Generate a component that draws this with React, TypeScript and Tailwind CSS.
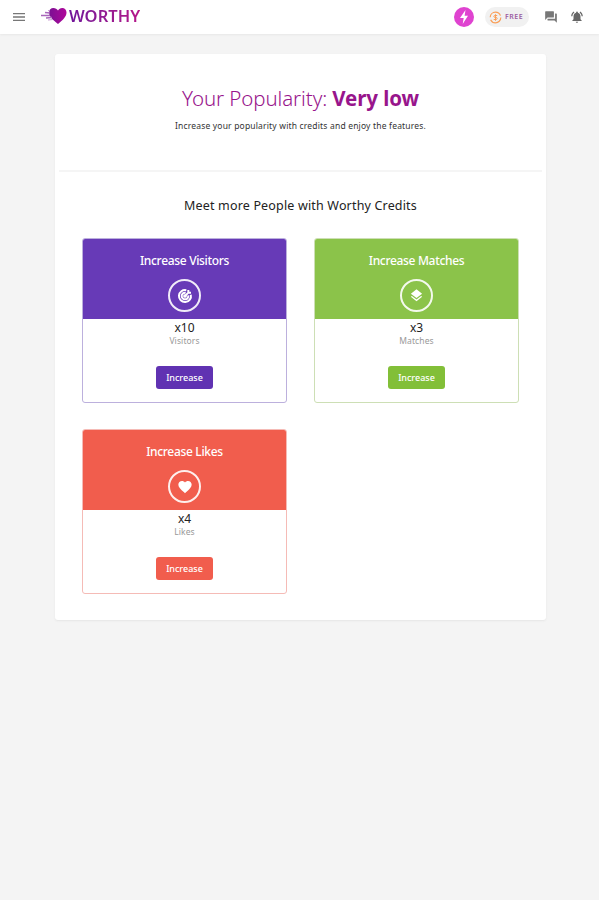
import type { ReactNode } from "react";
import { MdMenu, MdForum, MdNotificationsActive, MdLayers, MdFavorite } from "react-icons/md";

function BullseyeArrow() {
  return (
    <svg viewBox="0 0 24 24" className="size-4" fill="none" stroke="currentColor" strokeWidth="3">
      <path d="M14 3.3A9 9 0 1 0 20.7 10" />
      <path d="M13 7.1A5 5 0 1 0 16.9 11" />
      <path d="M12 12l6.5-6.5M17 3v4h4" />
      <circle cx="12" cy="12" r="1.3" fill="currentColor" />
    </svg>
  );
}

function Logo() {
  return (
    <div className="mb-[3px] ml-[14px] flex h-5 items-center">
      <svg width="26" height="18" viewBox="0 0 26 18">
        <defs>
          <linearGradient id="heart" x1="0" x2="1">
            <stop offset="0" stopColor="#7a1093" />
            <stop offset="1" stopColor="#b0079a" />
          </linearGradient>
        </defs>
        <path d="M17 17C12 13 8 9.5 8 5.5C8 2.7 10 1 12.3 1C14.5 1 16 2 17 3.6C18 2 19.2 1 21.3 1C23.7 1 25.5 2.8 25.5 5.5C25.5 9.5 22 13 17 17Z" fill="url(#heart)" />
        <path d="M4 5.5L9 6M0 8.5L9 8.5M5 11L11 10.5" stroke="#a866ba" strokeWidth="1.4" />
        <path d="M7 3.5L9 4M7 13L12 12.5" stroke="#c89ad2" />
      </svg>
      <span className="ml-[2px] bg-linear-to-r from-[#70149a] to-[#b51489] bg-clip-text text-[16.5px] leading-5 font-semibold tracking-[.05px] text-transparent">WORTHY</span>
    </div>
  );
}

type OfferProps = {
  name: string;
  count: string;
  icon: ReactNode;
  border: string;
  fill: string;
  button: string;
};

function Offer({ name, count, icon, border, fill, button }: OfferProps) {
  return (
    <section className={`flex h-[165px] w-[205px] flex-col items-center overflow-hidden rounded-[3px] border ${border}`}>
      <div className={`flex h-[80px] w-full shrink-0 flex-col items-center pt-[14px] text-white ${fill}`}>
        <h3 className="text-[12px] leading-4 font-medium tracking-[-.32px] whitespace-nowrap">Increase {name}</h3>
        <div className="mt-[10px] flex size-[33px] shrink-0 items-center justify-center rounded-full border-2 border-white/90">{icon}</div>
      </div>
      <p className="mt-[1px] text-[12px] leading-4 text-[#222]">{count}</p>
      <p className="text-[8.5px] leading-[10px] tracking-[.1px] text-[#999]">{name}</p>
      <button className={`mt-[20px] h-[23px] w-[57px] rounded-[3px] text-[9px] leading-none font-medium text-white ${button}`}>Increase</button>
    </section>
  );
}

export default function App() {
  return (
    <div className="min-h-[900px] w-full bg-[#f4f4f4] font-['Noto_Sans','Open_Sans',sans-serif]">
      <header className="flex h-[34px] items-center bg-white pr-[15px] pl-[11px] shadow-[0_0_3px_#ddd]">
        <MdMenu className="size-4 text-[#777]" />
        <Logo />
        <div className="ml-auto flex items-center">
          <div className="flex size-5 items-center justify-center rounded-full bg-[#df43d0]">
            <svg viewBox="0 0 14 16" className="h-4 w-[14px]" fill="white">
              <path d="M8.5 1L3 9H6.7L5.7 15L11 6.8H7.6Z" />
            </svg>
          </div>
          <div className="ml-[11px] flex h-5 w-[44px] items-center rounded-full bg-[#f1f1f1] pl-[4px]">
            <svg width="13" height="13" viewBox="0 0 13 13" fill="none" stroke="#fa9f58">
              <circle cx="6.5" cy="6.5" r="5.3" strokeWidth="1.2" strokeDasharray="14 2.5" />
              <path d="M8.2 4.5H5.7C4.5 4.5 4.5 6.3 5.7 6.4H7.2C8.5 6.5 8.5 8.4 7.2 8.5H4.7M6.5 3.2V9.8" />
            </svg>
            <span className="ml-[3px] text-[7px] leading-3 font-semibold tracking-[.5px] text-[#9a5b9f]">FREE</span>
          </div>
          <MdForum className="ml-[15px] size-[14px] text-[#777]" />
          <MdNotificationsActive className="ml-[12px] size-[14px] text-[#666]" />
        </div>
      </header>
      <main className="mt-[20px] ml-[55px] h-[566px] w-[491px] rounded-[3px] bg-white shadow-[0_1px_2px_#e5e5e5]">
        <div className="mx-1 flex h-[118px] flex-col items-center border-b-2 border-[#f5f5f5] pt-[29px] text-center">
          <h1 className="text-[20.5px] leading-[30px] font-light tracking-[-.1px] whitespace-nowrap text-[#98158c]">
            Your Popularity: <strong className="font-bold">Very low</strong>
          </h1>
          <p className="mt-[7px] text-[8.5px] leading-3 tracking-[.18px] whitespace-nowrap text-[#333]">Increase your popularity with credits and enjoy the features.</p>
        </div>
        <h2 className="mt-[24px] text-center text-[12.5px] leading-5 tracking-[.17px] whitespace-nowrap text-[#222]">Meet more People with Worthy Credits</h2>
        <div className="mt-[22px] grid grid-cols-[205px_205px] gap-x-[27px] gap-y-[26px] pl-[27px]">
          <Offer name="Visitors" count="x10" icon={<BullseyeArrow />} border="border-[#bcb0dd]" fill="bg-[#673ab7]" button="bg-[#6032b2]" />
          <Offer name="Matches" count="x3" icon={<MdLayers className="size-[15px]" />} border="border-[#cddfb5]" fill="bg-[#8bc34a]" button="bg-[#82bf38]" />
          <Offer name="Likes" count="x4" icon={<MdFavorite className="size-4" />} border="border-[#f5bbb6]" fill="bg-[#f15d4d]" button="bg-[#f15d4d]" />
        </div>
      </main>
    </div>
  );
}
